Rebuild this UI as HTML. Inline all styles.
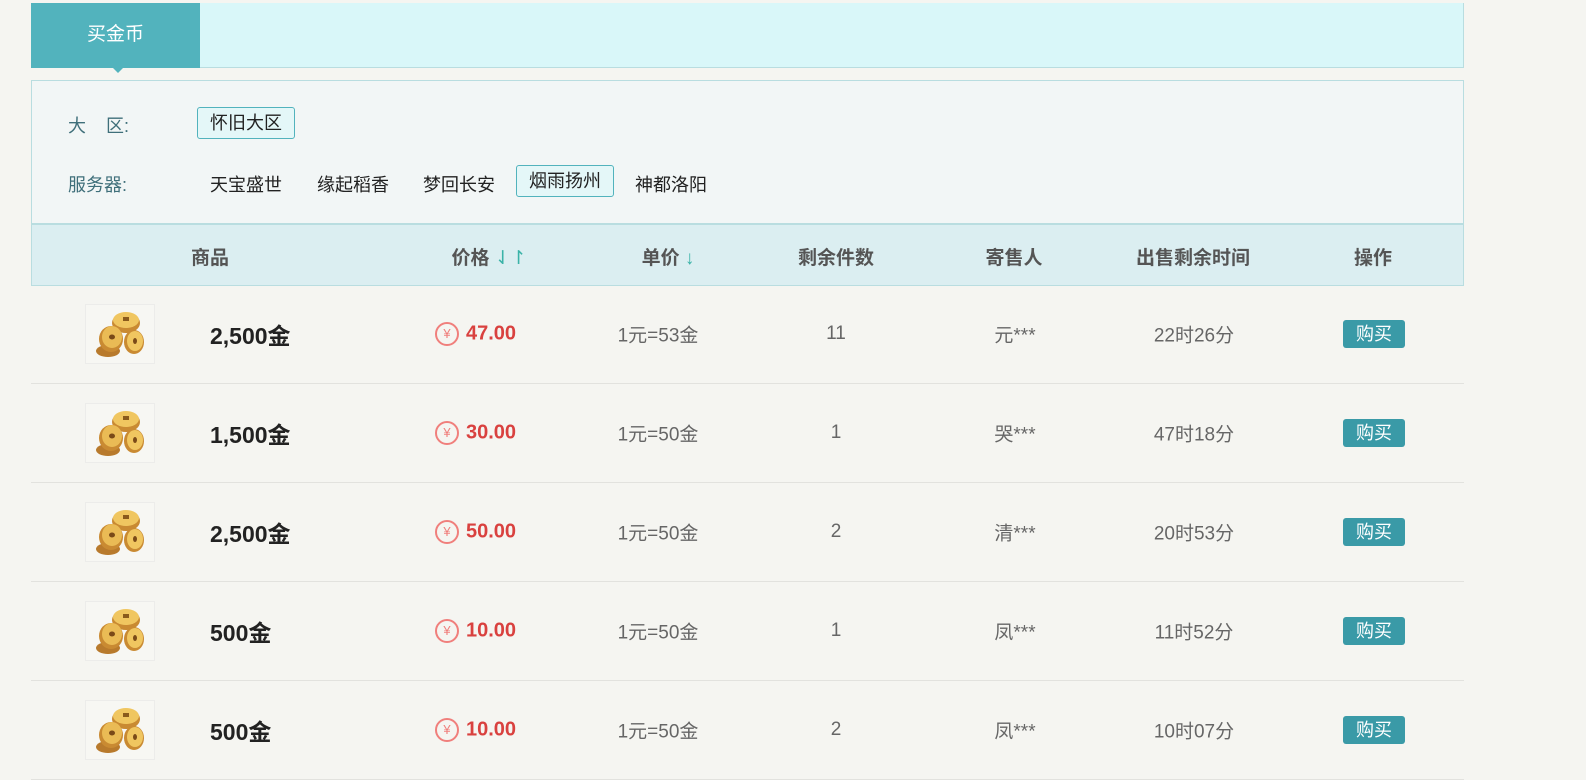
<!DOCTYPE html>
<html><head><meta charset="utf-8"><style>
*{margin:0;padding:0;box-sizing:border-box}
body{width:1586px;height:779px;overflow:hidden;background:#f5f5f1;font-family:"Liberation Sans","Noto Sans CJK SC",sans-serif;position:relative}
.abs{position:absolute}
.tabbar{left:31px;top:3px;width:1433px;height:65px;background:#d9f7f9;border:1px solid #b9dde0;border-top:none}
.tab{left:31px;top:3px;width:169px;height:65px;background:#52b3bd;color:#fff;font-size:19px;line-height:64px;text-align:center}
.tri{left:112px;top:67px;width:0;height:0;border-left:6px solid transparent;border-right:6px solid transparent;border-top:6px solid #52b3bd}
.filter{left:31px;top:80px;width:1433px;height:144px;background:#f2f6f6;border:1px solid #b9dde0}
.lbl{color:#3f6f7a;font-size:18px}
.opt{font-size:18px;color:#222}
.sel{border:1px solid #52b3bd;background:#e4f7f8;border-radius:3px;height:32px;line-height:30px;padding:0 12px}
.head{left:31px;top:224px;width:1433px;height:62px;background:#dbeef1;border:1px solid #b9dde0}
.h{top:243px;font-size:19px;font-weight:bold;color:#555;transform:translateX(-50%);white-space:nowrap}
.row{left:31px;width:1433px;height:99px;border-bottom:1px solid #e2e2de}
.c{font-size:19px;color:#666;transform:translate(-50%,-50%);white-space:nowrap}
.name{font-size:23px;font-weight:bold;color:#222;transform:translateY(-50%)}
.price{font-size:20px;font-weight:bold;color:#d9413f;transform:translateY(-50%)}
.yen{width:24px;height:24px;border:2px solid #f07f7c;border-radius:50%;color:#f07f7c;font-size:13px;text-align:center;line-height:20px;transform:translate(-50%,-50%)}
.btn{width:62px;height:28px;background:#3a9aa7;border-radius:3px;color:#fff;font-size:18px;text-align:center;line-height:28px;transform:translateY(-50%)}
.ico{width:70px;height:60px;background:#f7f7f3;border:1px solid #ececea;transform:translateY(-50%)}
</style></head><body>
<div class="abs tabbar"></div>
<div class="abs tab">买金币</div>
<div class="abs tri"></div>
<div class="abs filter"></div>
<div class="abs lbl" style="left:68px;top:112px">大&nbsp;&nbsp;&nbsp;&nbsp;区:</div>
<div class="abs opt sel" style="left:197px;top:107px">怀旧大区</div>
<div class="abs lbl" style="left:68px;top:171px">服务器:</div>
<div class="abs opt" style="left:210px;top:171px">天宝盛世</div>
<div class="abs opt" style="left:317px;top:171px">缘起稻香</div>
<div class="abs opt" style="left:423px;top:171px">梦回长安</div>
<div class="abs opt sel" style="left:516px;top:165px">烟雨扬州</div>
<div class="abs opt" style="left:635px;top:171px">神都洛阳</div>
<div class="abs head"></div>
<div class="abs h" style="left:210px">商品</div>
<div class="abs h" style="left:489px">价格 <span style="color:#3bb3a8;font-weight:normal">⇃↾</span></div>
<div class="abs h" style="left:668px">单价 <span style="color:#3bb3a8;font-weight:normal">↓</span></div>
<div class="abs h" style="left:836px">剩余件数</div>
<div class="abs h" style="left:1014px">寄售人</div>
<div class="abs h" style="left:1193px">出售剩余时间</div>
<div class="abs h" style="left:1373px">操作</div>

<svg width="0" height="0" style="position:absolute"><defs>
<g id="coin">
<ellipse cx="40" cy="18" rx="14" ry="10" fill="#c98a32"/><ellipse cx="40" cy="15" rx="13" ry="8" fill="#f0c660"/><rect x="37" y="12" width="6" height="4" fill="#8a5a1c"/>
<ellipse cx="22" cy="46" rx="12" ry="6" fill="#b87a2c"/>
<ellipse cx="25" cy="34" rx="12" ry="13" fill="#c98a32"/><ellipse cx="26" cy="32" rx="10" ry="11" fill="#eabb55"/><ellipse cx="26" cy="32" rx="3" ry="2.5" fill="#7a4a18"/>
<ellipse cx="48" cy="37" rx="10" ry="12" fill="#c98a32"/><ellipse cx="49" cy="36" rx="8" ry="10" fill="#f0c660"/><ellipse cx="49" cy="36" rx="2" ry="3" fill="#7a4a18"/>
</g></defs></svg>

<div id="rows"></div>
<script>
var d=[["2,500金","47.00","1元=53金","11","元***","22时26分"],["1,500金","30.00","1元=50金","1","哭***","47时18分"],["2,500金","50.00","1元=50金","2","清***","20时53分"],["500金","10.00","1元=50金","1","凤***","11时52分"],["500金","10.00","1元=50金","2","凤***","10时07分"]];
var h="";d.forEach(function(r,i){var t=285+i*99,c=t+49;
h+='<div class="abs row" style="top:'+t+'px"></div>';
h+='<div class="abs ico" style="left:85px;top:'+c+'px"><svg width="70" height="60"><use href="#coin"/></svg></div>';
h+='<div class="abs name" style="left:210px;top:'+c+'px">'+r[0]+'</div>';
h+='<div class="abs yen" style="left:447px;top:'+c+'px">¥</div>';
h+='<div class="abs price" style="left:466px;top:'+c+'px">'+r[1]+'</div>';
h+='<div class="abs c" style="left:658px;top:'+c+'px">'+r[2]+'</div>';
h+='<div class="abs c" style="left:836px;top:'+c+'px">'+r[3]+'</div>';
h+='<div class="abs c" style="left:1015px;top:'+c+'px">'+r[4]+'</div>';
h+='<div class="abs c" style="left:1194px;top:'+c+'px">'+r[5]+'</div>';
h+='<div class="abs btn" style="left:1343px;top:'+c+'px">购买</div>';});
document.getElementById("rows").innerHTML=h;
</script>
</body></html>
